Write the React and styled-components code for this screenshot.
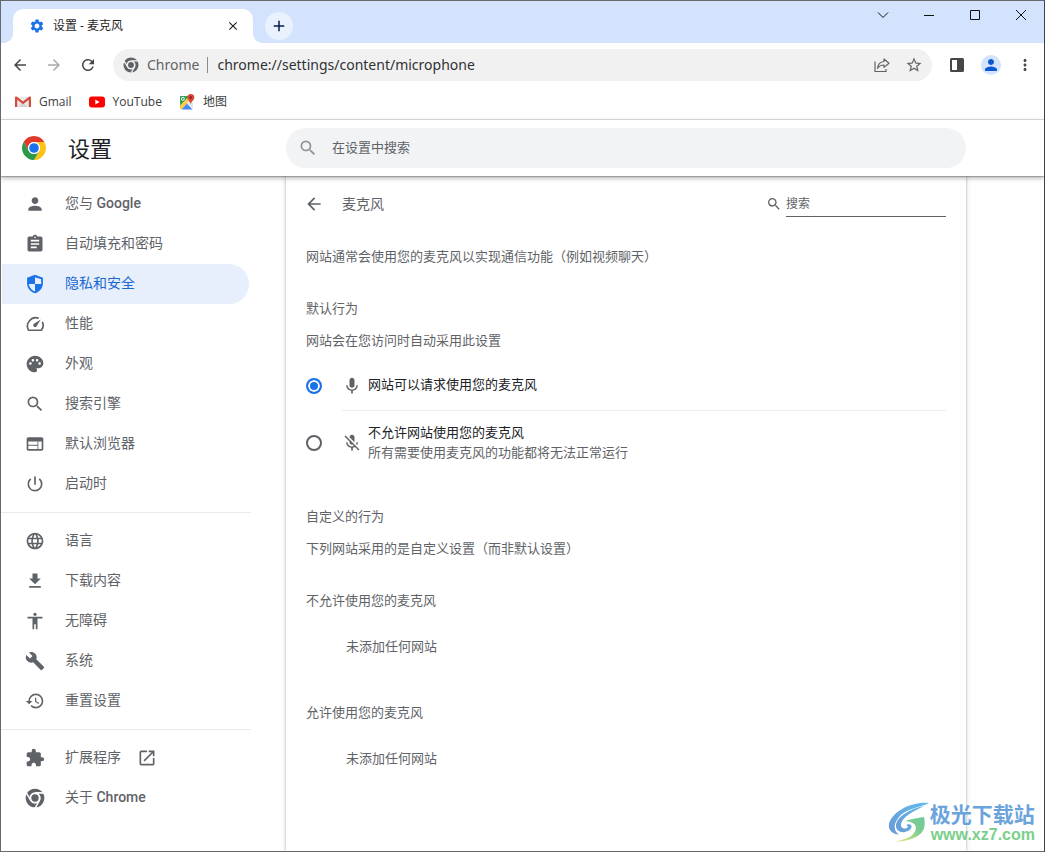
import React from "react";
import styled, { createGlobalStyle, css } from "styled-components";
import {
  MdSettings, MdClose, MdAdd, MdArrowBack, MdArrowForward, MdRefresh,
  MdStarOutline, MdPerson, MdMoreVert, MdSearch, MdAssignment, MdPalette,
  MdWeb, MdPowerSettingsNew, MdLanguage, MdFileDownload, MdAccessibility,
  MdBuild, MdRestore, MdExtension, MdOpenInNew, MdMic, MdMicOff,
} from "react-icons/md";

const uiFont = `"Open Sans", "Noto Sans CJK SC", sans-serif`;
const pageFont = `Roboto, "Noto Sans CJK SC", sans-serif`;

const GlobalStyle = createGlobalStyle`
  *, *::before, *::after { box-sizing: border-box; }
  body { margin: 0; background: #fff; }
  button, input { font: inherit; color: inherit; border: 0; padding: 0; background: none; outline: 0; }
  svg { display: block; flex: none; }
  h1, h2, h3, p { margin: 0; font-weight: 400; }
`;

/* ---------- browser frame ---------- */

const Window = styled.div`
  position: relative;
  display: flex;
  flex-direction: column;
  min-height: 100vh;
  border: 1px solid #68696d;
  border-right-color: #35464f;
  background: #fff;
  overflow: hidden;
  font-family: ${uiFont};
`;

const TabStrip = styled.div`
  display: flex;
  align-items: flex-start;
  height: 42px;
  padding-left: 12px;
  background: #d3e2fd;
`;

const Tab = styled.div`
  position: relative;
  display: flex;
  align-items: center;
  width: 240px;
  height: 34px;
  margin-top: 8px;
  padding: 0 12px 0 16px;
  gap: 8px;
  border-radius: 10px 10px 0 0;
  background: #fff;
  font-size: 12px;
  line-height: 16px;
  color: #1f1f1f;
  &::before, &::after {
    content: "";
    position: absolute;
    bottom: 0;
    width: 10px;
    height: 10px;
  }
  &::before { right: 100%; background: radial-gradient(circle at 0 0, transparent 10px, #fff 10px); }
  &::after { left: 100%; background: radial-gradient(circle at 100% 0, transparent 10px, #fff 10px); }
`;

const TabTitle = styled.span`
  flex: 1;
  white-space: nowrap;
`;

const IconButton = styled.button`
  display: flex;
  align-items: center;
  justify-content: center;
  flex: none;
  width: ${(p) => p.$w || 16}px;
  height: ${(p) => p.$h || p.$w || 16}px;
  color: ${(p) => p.$color || "#474747"};
  border-radius: ${(p) => (p.$fill ? "50%" : "0")};
  background: ${(p) => p.$fill || "none"};
`;

const NewTab = styled(IconButton)`
  margin: 11px auto 0 12px;
`;

const Toolbar = styled.div`
  display: flex;
  align-items: center;
  height: 44px;
  padding: 0 2px;
`;

const NavButtons = styled.div`
  display: flex;
  padding-right: 8px;
`;

const Omnibox = styled.div`
  display: flex;
  align-items: center;
  flex: 1;
  min-width: 0;
  height: 32px;
  padding: 0 2px 0 10px;
  border-radius: 16px;
  background: #f1f1f1;
  font-family: "Noto Sans", "Noto Sans CJK SC", sans-serif;
  font-size: 14px;
  line-height: 20px;
`;

const SiteChip = styled.span`
  margin-left: 8px;
  padding-right: 8px;
  line-height: 16px;
  border-right: 1px solid #8b8b8b;
  color: #5f6368;
`;

const UrlInput = styled.input`
  flex: 1;
  min-width: 0;
  margin-left: 9px;
  color: #303134;
`;

const ToolbarEnd = styled.div`
  display: flex;
  align-items: center;
  gap: 14px;
  padding-left: 15px;
  padding-right: 7px;
`;

const BookmarkBar = styled.nav`
  display: flex;
  align-items: center;
  gap: 17px;
  height: 33px;
  padding: 0 14px 3px;
  border-bottom: 1px solid #dedede;
`;

const Bookmark = styled.a`
  display: flex;
  align-items: center;
  gap: 8px;
  color: #3c4043;
  font-size: 12px;
  line-height: 20px;
  text-decoration: none;
`;

/* ---------- settings page ---------- */

const PageHeader = styled.header`
  position: relative;
  z-index: 1;
  display: flex;
  align-items: center;
  height: 56px;
  background: #fff;
  font-family: ${pageFont};
  box-shadow: 0 1px 1px rgba(0, 0, 0, 0.22), 0 2px 5px rgba(0, 0, 0, 0.3);
`;

const Brand = styled.div`
  display: flex;
  align-items: center;
  flex: 0 0 285px;
  gap: 22px;
  padding-left: 21px;
`;

const BrandTitle = styled.h1`
  padding-top: 4px;
  font-size: 22px;
  line-height: 28px;
  color: #202124;
`;

const SearchPill = styled.label`
  display: flex;
  align-items: center;
  flex: 0 1 680px;
  min-width: 0;
  height: 40px;
  padding: 0 12px;
  gap: 14px;
  border-radius: 20px;
  background: #f1f3f4;
  color: #909396;
  font-size: 13px;
  input {
    flex: 1;
    min-width: 0;
    padding-bottom: 2px;
    color: #5f6368;
  }
  input::placeholder { color: #5f6368; opacity: 1; }
`;

const Body = styled.div`
  display: flex;
  flex: 1;
  font-family: ${pageFont};
`;

const Sidebar = styled.nav`
  flex: 0 0 285px;
  padding: 8px 0;
`;

const MenuItem = styled.a`
  display: flex;
  align-items: center;
  width: 247px;
  height: 40px;
  margin-left: 1px;
  padding-left: 23px;
  border-radius: 0 20px 20px 0;
  color: #5f6368;
  font-size: 14px;
  line-height: 20px;
  text-decoration: none;
  ${(p) => p.$active && css`
    background: #e7effd;
    color: #1967d2;
  `}
`;

const MenuLabel = styled.span`
  margin: 0 16px 2px 20px;
`;

const Latin = styled.span`
  font-weight: 500;
`;

const MenuDivider = styled.hr`
  width: 250px;
  height: 1px;
  margin: 8px 0;
  border: 0;
  background: #e8eaed;
`;

const Main = styled.main`
  flex: 0 1 680px;
  min-width: 0;
  padding: 0 20px;
  background: #fff;
  box-shadow: 0 0 2px rgba(0, 0, 0, 0.28), 0 1px 6px rgba(0, 0, 0, 0.14);
  color: #5f6368;
  font-size: 13px;
  line-height: 20px;
`;

const SubpageHeader = styled.div`
  display: flex;
  align-items: center;
  height: 56px;
`;

const SubpageTitle = styled.h2`
  flex: 1;
  margin-left: 20px;
  font-size: 14px;
`;

const SubpageSearch = styled.label`
  display: flex;
  align-items: center;
  gap: 4px;
  font-size: 12px;
  input {
    width: 160px;
    height: 26px;
    border-bottom: 1px solid #5f6368;
  }
  input::placeholder { color: #5f6368; opacity: 1; }
`;

const Intro = styled.p`
  margin-top: 15px;
`;

const Section = styled.section`
  margin-top: 32px;
`;

const SectionTitle = styled.h3`
  font-size: 13px;
  line-height: 20px;
`;

const Note = styled.p`
  margin-top: 12px;
`;

const RadioList = styled.div`
  margin-top: 10px;
`;

const RadioRow = styled.label`
  display: flex;
  align-items: stretch;
  gap: 20px;
`;

const Radio = styled.input`
  appearance: none;
  align-self: center;
  flex: none;
  width: 16px;
  height: 16px;
  margin: 0;
  border: 2px solid #5f6368;
  border-radius: 50%;
  &:checked {
    border-color: #1a73e8;
    background: #1a73e8;
    box-shadow: inset 0 0 0 2px #fff;
  }
`;

const RadioContent = styled.span`
  display: flex;
  align-items: center;
  flex: 1;
  gap: 6px;
  min-height: ${(p) => (p.$tall ? 64 : 50)}px;
  border-bottom: ${(p) => (p.$line ? "1px solid #ececee" : "0")};
`;

const RadioText = styled.span`
  display: flex;
  flex-direction: column;
  margin-bottom: 1px;
  strong {
    font-weight: 400;
    color: #202124;
  }
`;

const SiteGroup = styled.section`
  margin-top: ${(p) => p.$gap || 32}px;
  p { margin: 26px 0 0 40px; }
`;

const Watermark = styled.div`
  position: absolute;
  right: 9px;
  bottom: 6px;
  display: flex;
  align-items: center;
  opacity: 0.9;
`;

const WatermarkText = styled.div`
  display: flex;
  flex-direction: column;
  span {
    font: 700 21px/24px "Noto Sans CJK SC", sans-serif;
    color: #5b9bd8;
  }
  small {
    margin-left: 1px;
    font: 700 16px/20px "Liberation Sans", sans-serif;
    color: #6ccb80;
  }
`;

/* ---------- drawings ---------- */

const ChromeMark = ({ size, mono, gap }) => {
  const c = mono ? [mono, mono, mono, mono] : ["#e2392b", "#fcc313", "#2a9a48", "#1a73e8"];
  const line = mono ? { stroke: gap, strokeWidth: 1.6 } : {};
  return (
    <svg width={size} height={size} viewBox="0 0 24 24" aria-hidden="true">
      <path fill={c[0]} {...line} d="M1.61 6A12 12 0 0 1 22.39 6H12A6 6 0 0 0 6.8 15Z" />
      <path fill={c[1]} {...line} d="M22.39 6A12 12 0 0 1 12 24L17.2 15A6 6 0 0 0 12 6Z" />
      <path fill={c[2]} {...line} d="M12 24A12 12 0 0 1 1.61 6L6.8 15A6 6 0 0 0 17.2 15Z" />
      <circle cx="12" cy="12" r="6" fill={gap || "#fff"} />
      <circle cx="12" cy="12" r={mono ? 4.4 : 4.8} fill={c[3]} />
    </svg>
  );
};

const GmailMark = () => (
  <svg width="16" height="16" viewBox="0 0 16 16" aria-hidden="true">
    <path fill="#e9e9e9" d="M2 3h12v10H2z" />
    <path fill="#d5d5d5" d="M3 13l5-4.5L13 13z" />
    <path fill="#d54b3d" d="M0 3.6C0 2.6 1.2 2 2 2.7L8 7.5l6-4.8c.8-.7 2-.1 2 .9V13h-2.2V5.700L8 10.300 2.200 5.700V13H0z" />
  </svg>
);

const YouTubeMark = () => (
  <svg width="16" height="16" viewBox="0 0 16 16" aria-hidden="true">
    <rect x="0" y="2.5" width="16" height="11" rx="3" fill="#f00" />
    <path fill="#fff" d="M6.3 5.6v4.8L10.6 8z" />
  </svg>
);

const MapsMark = () => (
  <svg width="16" height="16" viewBox="0 0 16 16" aria-hidden="true">
    <path fill="#2f9e56" d="M1 2h9.5L1 12z" />
    <path fill="#fbcb43" d="M1 15V11.5L10.5 2 12 5.5 3 15z" />
    <path fill="#e4e7ea" d="M10 6l4 3v6L8 9z" />
    <path fill="#4a89f3" d="M2.5 15.5L8 9.5l5.5 6z" />
    <circle cx="3.8" cy="4.8" r="1.5" fill="none" stroke="#fff" strokeWidth="1" />
    <path fill="#dc4437" d="M11.8 0a3.5 3.5 0 0 1 3.5 3.5c0 2.5-2.9 3.6-3.5 7-.6-3.4-3.5-4.5-3.5-7A3.5 3.5 0 0 1 11.8 0z" />
    <circle cx="11.8" cy="3.5" r="1.2" fill="#7c231b" />
  </svg>
);

const ShareMark = () => (
  <svg width="16" height="16" viewBox="0 0 16 16" fill="none" stroke="#5f6368" strokeWidth="1.2" aria-hidden="true">
    <path d="M1 4.5V14.5H12V12" />
    <path strokeLinejoin="round" d="M10 2l5 4.2-5 4.2V8C7 8 5 9 3.5 11.300 4 7.500 6.300 4.800 10 4.500z" />
  </svg>
);

const SidePanelMark = () => (
  <svg width="14" height="14" viewBox="0 0 14 14" aria-hidden="true">
    <path fill="#474747" fillRule="evenodd" d="M1.5 0h11A1.5 1.5 0 0 1 14 1.5v11a1.5 1.5 0 0 1-1.5 1.5h-11A1.5 1.5 0 0 1 0 12.5v-11A1.5 1.5 0 0 1 1.5 0zM2 2v10h5V2z" />
  </svg>
);

const WindowMark = ({ d }) => (
  <svg width="12" height="12" viewBox="0 0 12 12" fill="none" stroke="#111" strokeWidth="1" aria-hidden="true">
    <path d={d} />
  </svg>
);

const ShieldMark = () => (
  <svg width="20" height="20" viewBox="0 0 24 24" aria-hidden="true">
    <path fill="#1a73e8" fillRule="evenodd" d="M12 1l9.5 3.5V11c0 5.6-3.9 10.6-9.5 12-5.6-1.4-9.5-6.4-9.5-12V4.5zM12 3.8V12H4.7c.4 4 3.2 7.7 7.3 8.9V12h7.3c.1-.4.1-.8.1-1.2V6.2z" />
  </svg>
);

const GaugeMark = () => (
  <svg width="20" height="20" viewBox="0 0 24 24" fill="none" stroke="currentColor" aria-hidden="true">
    <path strokeWidth="2" strokeLinejoin="round" d="M16.5 5.2A10 10 0 0 0 4.3 19.5H19.7A10 10 0 0 0 20.8 9.3" />
    <path fill="currentColor" stroke="none" d="M19 6.5l-5.3 8.4a2.2 2.2 0 1 1-3.1-3.1z" />
  </svg>
);

const SiteLogo = () => (
  <svg width="42" height="42" viewBox="0 0 42 42" aria-hidden="true">
    <defs>
      <linearGradient id="swirlBlue" x1="0" y1="1" x2="1" y2="0">
        <stop offset="0" stopColor="#5a8fd2" />
        <stop offset="1" stopColor="#4fb4ea" />
      </linearGradient>
      <linearGradient id="swirlGreen" x1="0" y1="1" x2="1" y2="0">
        <stop offset="0" stopColor="#e2ea62" />
        <stop offset="0.6" stopColor="#72c887" />
        <stop offset="1" stopColor="#5cc48c" />
      </linearGradient>
    </defs>
    <path fill="url(#swirlBlue)" d="M41 1C25-1 4 9 1 22c-1 6 3 10 10 10.500C4 28 6 19 14 12 22 6 33 5 41 1z" />
    <path fill="url(#swirlBlue)" d="M36 4C24 6 9 14 8 23c-.5 5 4 8 9 7 4-.8 7-3.500 6.500-6-.4-2-3.500-2.500-5.500-.8 2.500 0 2.500 2.800-.5 3.300-3 .5-5-1.500-4.500-4.500C14 15 26 9 36 4z" />
    <path fill="url(#swirlGreen)" d="M17 19c7-2.500 13-3 19-4 2 9 0 16-8 20-6 3-14 5-22 4.500 10-1.500 18-4 21-10 2.500-5 0-10-10-10.500z" />
  </svg>
);

/* ---------- content ---------- */

const menu = [
  [
    { icon: <MdPerson size={20} />, label: <>您与 <Latin>Google</Latin></> },
    { icon: <MdAssignment size={20} />, label: "自动填充和密码" },
    { icon: <ShieldMark />, label: "隐私和安全", active: true },
    { icon: <GaugeMark />, label: "性能" },
    { icon: <MdPalette size={20} />, label: "外观" },
    { icon: <MdSearch size={20} />, label: "搜索引擎" },
    { icon: <MdWeb size={20} />, label: "默认浏览器" },
    { icon: <MdPowerSettingsNew size={20} />, label: "启动时" },
  ],
  [
    { icon: <MdLanguage size={20} />, label: "语言" },
    { icon: <MdFileDownload size={20} />, label: "下载内容" },
    { icon: <MdAccessibility size={20} />, label: "无障碍" },
    { icon: <MdBuild size={20} />, label: "系统" },
    { icon: <MdRestore size={20} />, label: "重置设置" },
  ],
  [
    { icon: <MdExtension size={20} />, label: "扩展程序", trailing: <MdOpenInNew size={20} /> },
    { icon: <ChromeMark size={20} mono="#5f6368" gap="#fff" />, label: <>关于 <Latin>Chrome</Latin></> },
  ],
];

const windowButtons = [
  ["搜索标签页", "M1 3.5L6 8.5L11 3.5"],
  ["最小化", "M1 6.5H11"],
  ["最大化", "M1.5 1.5H10.5V10.5H1.5Z"],
  ["关闭", "M1 1L11 11M11 1L1 11"],
];

export default function App() {
  return (
    <Window>
      <GlobalStyle />
      <TabStrip>
        <Tab>
          <MdSettings size={16} color="#1a73e8" />
          <TabTitle>设置 - 麦克风</TabTitle>
          <IconButton aria-label="关闭标签页" $color="#1f1f1f"><MdClose size={14} /></IconButton>
        </Tab>
        <NewTab aria-label="新标签页" $w={28} $fill="#e9f1fe" $color="#041e49"><MdAdd size={18} /></NewTab>
        {windowButtons.map(([name, d]) => (
          <IconButton key={name} aria-label={name} $w={46} $h={28}><WindowMark d={d} /></IconButton>
        ))}
      </TabStrip>

      <Toolbar>
        <NavButtons>
          <IconButton aria-label="后退" $w={34}><MdArrowBack size={18} /></IconButton>
          <IconButton aria-label="前进" $w={34} $color="#ababab"><MdArrowForward size={18} /></IconButton>
          <IconButton aria-label="重新加载" $w={34}><MdRefresh size={18} /></IconButton>
        </NavButtons>
        <Omnibox>
          <ChromeMark size={16} mono="#5f6368" gap="#f1f1f1" />
          <SiteChip>Chrome</SiteChip>
          <UrlInput aria-label="地址栏" defaultValue="chrome://settings/content/microphone" />
          <IconButton aria-label="分享" $w={32}><ShareMark /></IconButton>
          <IconButton aria-label="收藏" $w={32} $color="#5f6368"><MdStarOutline size={18} /></IconButton>
        </Omnibox>
        <ToolbarEnd>
          <IconButton aria-label="侧边栏" $w={20}><SidePanelMark /></IconButton>
          <IconButton aria-label="个人资料" $w={20} $fill="#d3e3fd" $color="#0b57d0"><MdPerson size={18} /></IconButton>
          <IconButton aria-label="更多" $w={20}><MdMoreVert size={18} /></IconButton>
        </ToolbarEnd>
      </Toolbar>

      <BookmarkBar>
        <Bookmark href="#gmail"><GmailMark />Gmail</Bookmark>
        <Bookmark href="#youtube"><YouTubeMark />YouTube</Bookmark>
        <Bookmark href="#maps"><MapsMark />地图</Bookmark>
      </BookmarkBar>

      <PageHeader>
        <Brand>
          <ChromeMark size={24} />
          <BrandTitle>设置</BrandTitle>
        </Brand>
        <SearchPill>
          <MdSearch size={20} />
          <input type="text" aria-label="在设置中搜索" placeholder="在设置中搜索" />
        </SearchPill>
      </PageHeader>

      <Body>
        <Sidebar>
          {menu.map((group, i) => (
            <React.Fragment key={i}>
              {i > 0 && <MenuDivider />}
              {group.map((item, j) => (
                <MenuItem key={j} href="#menu" $active={item.active}>
                  {item.icon}
                  <MenuLabel>{item.label}</MenuLabel>
                  {item.trailing}
                </MenuItem>
              ))}
            </React.Fragment>
          ))}
        </Sidebar>

        <Main>
          <SubpageHeader>
            <IconButton aria-label="返回" $color="#5f6368"><MdArrowBack size={20} /></IconButton>
            <SubpageTitle>麦克风</SubpageTitle>
            <SubpageSearch>
              <MdSearch size={16} />
              <input type="text" aria-label="搜索" placeholder="搜索" />
            </SubpageSearch>
          </SubpageHeader>

          <Intro>网站通常会使用您的麦克风以实现通信功能（例如视频聊天）</Intro>

          <Section>
            <SectionTitle>默认行为</SectionTitle>
            <Note>网站会在您访问时自动采用此设置</Note>
            <RadioList>
              <RadioRow>
                <Radio type="radio" name="mic" defaultChecked />
                <RadioContent $line>
                  <MdMic size={20} />
                  <RadioText><strong>网站可以请求使用您的麦克风</strong></RadioText>
                </RadioContent>
              </RadioRow>
              <RadioRow>
                <Radio type="radio" name="mic" />
                <RadioContent $tall>
                  <MdMicOff size={20} />
                  <RadioText>
                    <strong>不允许网站使用您的麦克风</strong>
                    <span>所有需要使用麦克风的功能都将无法正常运行</span>
                  </RadioText>
                </RadioContent>
              </RadioRow>
            </RadioList>
          </Section>

          <Section>
            <SectionTitle>自定义的行为</SectionTitle>
            <Note>下列网站采用的是自定义设置（而非默认设置）</Note>
          </Section>

          <SiteGroup>
            <SectionTitle>不允许使用您的麦克风</SectionTitle>
            <p>未添加任何网站</p>
          </SiteGroup>
          <SiteGroup $gap={46}>
            <SectionTitle>允许使用您的麦克风</SectionTitle>
            <p>未添加任何网站</p>
          </SiteGroup>
        </Main>
      </Body>

      <Watermark>
        <SiteLogo />
        <WatermarkText>
          <span>极光下载站</span>
          <small>www.xz7.com</small>
        </WatermarkText>
      </Watermark>
    </Window>
  );
}
